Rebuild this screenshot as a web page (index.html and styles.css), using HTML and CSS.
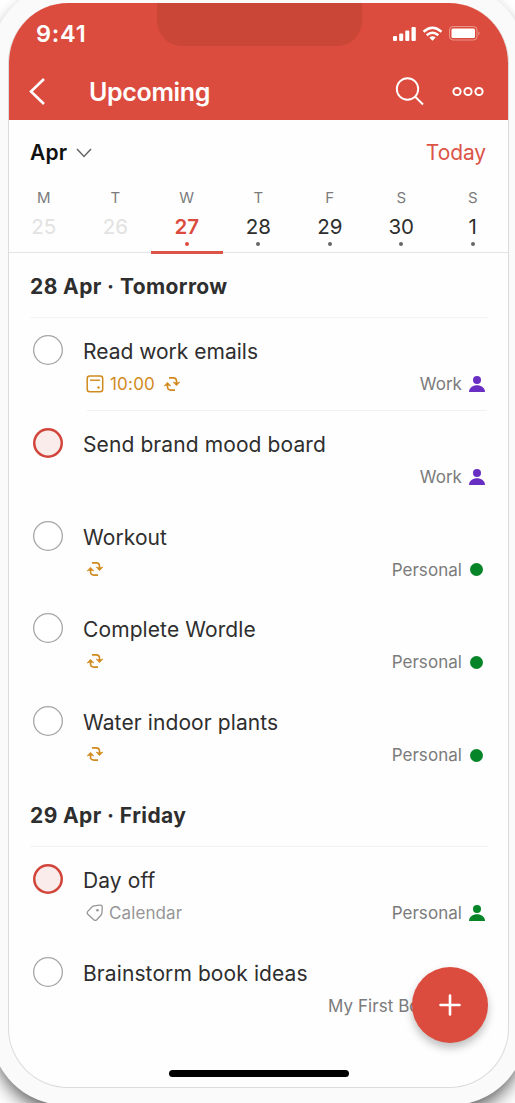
FILE: index.html
```html
<!DOCTYPE html>
<html lang="en">
<head>
<meta charset="utf-8">
<title>Upcoming</title>
<link rel="stylesheet" href="styles.css">
</head>
<body>
<svg class="defs" aria-hidden="true">
  <symbol id="repeat" viewBox="0 0 18 16">
    <path d="M6 1.900h4.200q3.300 0 3.300 3.300v3M12 14.100H7.800q-3.300 0-3.300-3.300v-3" fill="none" stroke="currentColor" stroke-width="1.600"/>
    <path d="M10 6l3.500 3.800L17 6l-3.500.8zM1 10l3.500-3.800L8 10l-3.500-.8z" fill="currentColor" stroke="currentColor" stroke-width=".5"/>
  </symbol>
  <symbol id="person" viewBox="0 0 16 16">
    <circle cx="8" cy="4" r="4" fill="currentColor"/>
    <path d="M0 16c0-9 16-9 16 0z" fill="currentColor"/>
  </symbol>
</svg>
<div class="device">
  <main class="screen">
    <header class="header">
      <div class="notch"></div>
      <div class="status">
        <span class="clock">9:41</span>
        <svg class="status-icons" width="90" height="18" viewBox="0 0 90 18">
          <g fill="#fff">
            <rect x="1" y="11" width="4" height="5" rx="1"/><rect x="7.200" y="8.500" width="4" height="7.500" rx="1"/><rect x="13.300" y="5.500" width="4" height="10.500" rx="1"/><rect x="19.500" y="2" width="4.300" height="14" rx="1"/>
            <path d="M40.500 15.800l-3.200-3.200q3.200-2.500 6.400 0z"/>
            <rect x="59.500" y="3.500" width="23.500" height="9.500" rx="1.500"/>
            <path d="M86.500 6.500q2 1.500 0 4z" opacity=".5"/>
          </g>
          <g fill="none" stroke="#fff" stroke-width="2.500"><path d="M31.500 6.800q9-8 18 0M34.700 10.300q5.800-5 11.600 0"/></g>
          <rect x="57.500" y="1.500" width="27.500" height="13.500" rx="3.500" fill="none" stroke="#fff" stroke-opacity=".4"/>
        </svg>
      </div>
      <div class="navbar">
        <svg class="back" width="18" height="30" viewBox="0 0 18 30"><path d="M16 2L3 14.500 16 27" fill="none" stroke="#fff" stroke-width="2.600"/></svg>
        <h1 class="title">Upcoming</h1>
        <svg class="search" width="30" height="30" viewBox="0 0 30 30"><g fill="none" stroke="#fff" stroke-width="1.900"><circle cx="12.500" cy="12" r="10.700"/><path d="M20 19.500l8 8"/></g></svg>
        <svg class="more" width="34" height="12" viewBox="0 0 34 12"><g fill="none" stroke="#fff" stroke-width="2"><circle cx="6" cy="5.500" r="3.600"/><circle cx="17" cy="5.500" r="3.600"/><circle cx="28" cy="5.500" r="3.600"/></g></svg>
      </div>
    </header>
    <section class="calendar">
      <div class="month-row">
        <span class="month">Apr</span>
        <svg width="16" height="10" viewBox="0 0 16 10"><path d="M1 1l7 7.500L15 1" fill="none" stroke="#666" stroke-width="1.500"/></svg>
        <span class="today">Today</span>
      </div>
      <div class="week">
        <div class="day past"><span class="letter">M</span><span class="num">25</span></div>
        <div class="day past"><span class="letter">T</span><span class="num">26</span></div>
        <div class="day active"><span class="letter">W</span><span class="num">27</span><i class="pip"></i></div>
        <div class="day"><span class="letter">T</span><span class="num">28</span><i class="pip"></i></div>
        <div class="day"><span class="letter">F</span><span class="num">29</span><i class="pip"></i></div>
        <div class="day"><span class="letter">S</span><span class="num">30</span><i class="pip"></i></div>
        <div class="day"><span class="letter">S</span><span class="num">1</span><i class="pip"></i></div>
      </div>
    </section>
    <section class="group">
      <h2 class="group-title">28 Apr · Tomorrow</h2>
      <article class="task lined">
        <span class="check"></span>
        <div class="body">
          <div class="name tight">Read work emails</div>
          <div class="meta">
            <svg class="cal" width="18" height="18" viewBox="0 0 18 18"><rect x="1.200" y="1" width="15.500" height="15.800" rx="2.500" fill="none" stroke="currentColor" stroke-width="1.500"/><path d="M4 5.200h10" stroke="currentColor" stroke-width="1.400"/><circle cx="12.500" cy="12.500" r="1.200" fill="currentColor"/></svg>
            <span class="time">10:00</span>
            <svg class="repeat" width="18" height="16"><use href="#repeat"/></svg>
            <span class="project work">Work</span><svg class="person purple" width="16" height="16"><use href="#person"/></svg>
          </div>
        </div>
      </article>
      <article class="task">
        <span class="check urgent"></span>
        <div class="body">
          <div class="name">Send brand mood board</div>
          <div class="meta"><span class="project work">Work</span><svg class="person purple" width="16" height="16"><use href="#person"/></svg></div>
        </div>
      </article>
      <article class="task">
        <span class="check"></span>
        <div class="body">
          <div class="name">Workout</div>
          <div class="meta"><svg class="repeat first" width="18" height="16"><use href="#repeat"/></svg><span class="project">Personal</span><i class="dot"></i></div>
        </div>
      </article>
      <article class="task">
        <span class="check"></span>
        <div class="body">
          <div class="name">Complete Wordle</div>
          <div class="meta"><svg class="repeat first" width="18" height="16"><use href="#repeat"/></svg><span class="project">Personal</span><i class="dot"></i></div>
        </div>
      </article>
      <article class="task">
        <span class="check"></span>
        <div class="body">
          <div class="name">Water indoor plants</div>
          <div class="meta"><svg class="repeat first" width="18" height="16"><use href="#repeat"/></svg><span class="project">Personal</span><i class="dot"></i></div>
        </div>
      </article>
    </section>
    <section class="group">
      <h2 class="group-title">29 Apr · Friday</h2>
      <article class="task">
        <span class="check urgent"></span>
        <div class="body">
          <div class="name">Day off</div>
          <div class="meta">
            <svg class="tag" width="18" height="18" viewBox="0 0 18 18"><path d="M8.200 1.800L13.700 1.200Q16.300 1 16.300 3.600L15.900 9Q15.800 10.300 14.900 11.200L10.700 15.700Q9.300 17 7.800 15.700L1.800 10.200Q.6 8.800 1.800 7.400L6.200 2.800Q7.100 1.900 8.200 1.800z" fill="none" stroke="currentColor" stroke-width="1.300"/><circle cx="11.500" cy="6.200" r="1.300" fill="currentColor"/></svg>
            <span class="label">Calendar</span>
            <span class="project">Personal</span><svg class="person green" width="16" height="16"><use href="#person"/></svg>
          </div>
        </div>
      </article>
      <article class="task">
        <span class="check"></span>
        <div class="body">
          <div class="name">Brainstorm book ideas</div>
          <div class="meta"><span class="project long">My First Board</span><i class="dot"></i></div>
        </div>
      </article>
    </section>
    <button class="fab" aria-label="Add task"><svg width="24" height="24" viewBox="0 0 24 24"><path d="M12 2.500v19M2.500 12h19" stroke="#fff" stroke-width="2.600" stroke-linecap="round"/></svg></button>
    <div class="home-bar"></div>
  </main>
</div>
</body>
</html>
```
FILE: styles.css
```css
* { box-sizing: border-box; }
body { margin: 0; width: 515px; height: 1103px; overflow: hidden; background: #fff; font-family: Inter, "Liberation Sans", sans-serif; color: #2e2e2e; }
.defs { position: absolute; width: 0; height: 0; }
.device { width: 535px; height: 1120px; margin: -15px 0 0 -9px; padding: 18px 17px 0; border-radius: 74px; background: #fafafa; box-shadow: 0 12px 18px -4px rgba(0,0,0,.6), 0 0 8px rgba(0,0,0,.08); }
.screen { position: relative; width: 501px; height: 1085px; border: 1px solid #dcdcdc; border-top: 0; border-radius: 60px; background: #fefefe; overflow: hidden; }
.header { position: relative; height: 117px; margin: 0 -1px; background: #dc4c3e; color: #fff; }
.notch { position: absolute; left: 149px; top: 0; width: 205px; height: 43px; border-radius: 0 0 25px 25px; background: #ca4637; }
.status { display: flex; justify-content: space-between; align-items: center; height: 60px; padding: 0 27px 0 28px; }
.clock { font-size: 23.500px; font-weight: 600; letter-spacing: .8px; }
.status-icons { margin-top: 2px; }
.navbar { display: flex; align-items: center; height: 57px; padding: 0 24px 0 20px; }
.title { margin: 0 auto 0 43px; font-size: 25px; font-weight: 600; line-height: 30px; letter-spacing: -.35px; }
.more { margin-left: 26px; }
.calendar { height: 133px; border-bottom: 1px solid #e4e4e4; }
.month-row { display: flex; align-items: center; height: 65px; padding: 0 22px 0 21px; }
.month { margin-right: 9px; font-size: 21px; font-weight: 600; letter-spacing: .2px; color: #111; }
.today { margin-left: auto; font-size: 21px; letter-spacing: -.1px; color: #dc5347; }
.week { display: grid; grid-template-columns: repeat(7, 71.500px); margin: 1px 0 0 -1px; height: 68px; }
.day { display: flex; flex-direction: column; align-items: center; font-size: 20.500px; }
.letter { font-size: 15px; line-height: 22px; margin-top: 1px; color: #7b7b7b; }
.num { line-height: 28px; margin-top: 4px; }
.past .num { color: #e2e2e2; }
.pip { width: 4px; height: 4px; margin-top: 1px; border-radius: 50%; background: #666; }
.active { border-bottom: 3px solid #dc5347; }
.active .num { color: #dc4c3e; font-weight: 600; }
.active .pip { background: #dc4c3e; }
.group-title { height: 65px; margin: 0 20px 0 21px; border-bottom: 1px solid #f3f3f3; font-size: 21px; font-weight: 700; line-height: 67px; letter-spacing: .4px; }
.task { display: flex; height: 92.800px; padding: 0 21px 0 24px; }
.check { flex: none; width: 30px; height: 30px; margin: 17px 20px 0 0; border-radius: 50%; background: #fff; box-shadow: inset 0 0 0 1.300px #a5a5a5; }
.urgent { background: #faecea; box-shadow: inset 0 0 0 2.500px #d1453b; }
.body { flex: 1; padding-top: 22px; white-space: nowrap; }
.lined .body { position: relative; }
.lined .body::after { content: ""; position: absolute; left: 4px; right: 0; bottom: 0; height: 1px; background: #f1f1f1; }
.name { font-size: 21px; line-height: 24px; letter-spacing: .1px; }
.tight { letter-spacing: 0; }
.meta { display: flex; align-items: center; height: 20px; margin-top: 10px; padding: 0 2px 0 3px; color: #d18a1e; }
.time { margin-left: 6px; font-size: 17px; letter-spacing: .2px; }
.repeat { margin-left: 8px; }
.repeat.first { margin-left: 0; margin-bottom: 2px; }
.project { margin-left: auto; font-size: 17px; letter-spacing: .05px; color: #7b7b7b; }
.person { margin: 0 0 0 7px; }
.purple { color: #692fc2; }
.green { color: #058527; }
.dot { width: 13px; height: 13px; margin: 0 2px 0 8px; border-radius: 50%; background: #058527; }
.long { margin-right: 16px; }
.tag, .label { color: #969696; }
.label { margin-left: 5px; font-size: 17px; letter-spacing: .1px; }
.fab { position: absolute; left: 403px; top: 964px; width: 76px; height: 76px; padding: 0; display: grid; place-items: center; border: 0; border-radius: 50%; background: #dc4c3e; box-shadow: 0 5px 8px rgba(0,0,0,.25); }
.home-bar { position: absolute; left: 160px; top: 1067px; width: 180px; height: 7px; border-radius: 4px; background: #000; }
```
